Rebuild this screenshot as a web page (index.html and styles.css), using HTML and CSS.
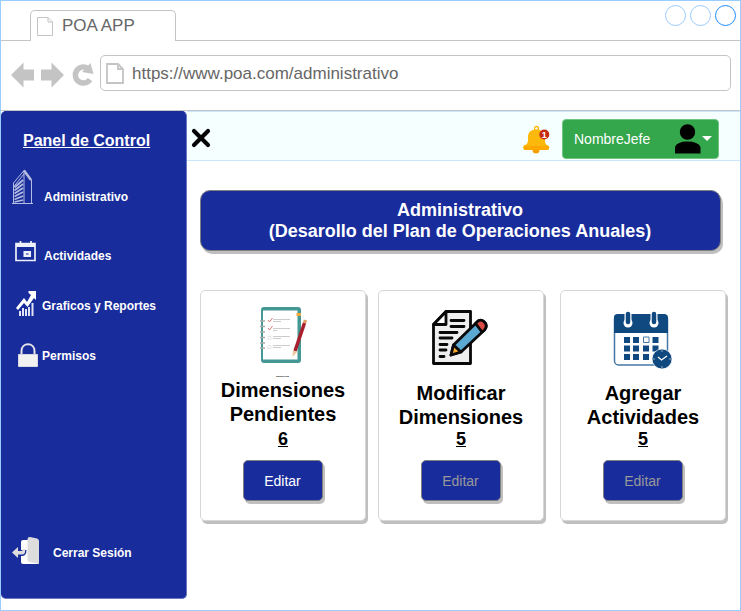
FILE: index.html
```html
<!DOCTYPE html>
<html lang="es">
<head>
<meta charset="utf-8">
<title>POA APP</title>
<link rel="stylesheet" href="styles.css">
</head>
<body>
<div class="window">
  <header class="tabs">
    <div class="tab">
      <svg class="tab-icon" width="16" height="19" viewBox="0 0 16 19" fill="none" stroke="#c4c4c4"><path d="M.5.5H11L15.500 5V18.500H.5ZM11 .5V5H15.500"/></svg>
      <span>POA APP</span>
    </div>
    <div class="controls"><i></i><i></i><i class="active"></i></div>
  </header>
  <nav class="toolbar">
    <svg class="nav-icons" width="83" height="26" viewBox="0 0 83 26">
      <path fill="#c4c4c4" d="M0 13L12.500 .5V7.500H23V18.500H12.500V25.500ZM53 13L40.500 .5V7.500H30V18.500H40.500V25.500Z"/>
      <path fill="none" stroke="#c4c4c4" stroke-width="5.500" d="M79 17.500A8 8 0 1 1 77 6.500"/>
      <path fill="#c4c4c4" d="M79.500 1L82.500 12L71 10Z"/>
    </svg>
    <div class="address">
      <svg width="18" height="21" viewBox="0 0 18 21" fill="none" stroke="#c4c4c4" stroke-width="1.800"><path d="M1 1H12L17 6V20H1ZM12 1V6H17"/></svg>
      <span>https://www.poa.com/administrativo</span>
    </div>
  </nav>
  <div class="app">
    <aside class="sidebar">
      <h2>Panel de Control</h2>
      <a class="item building">
        <svg width="22" height="36" viewBox="0 0 22 36" fill="none" stroke="#b4bce2">
          <path d="M0 34.500H21M1.500 34V14L12 1.500V34M12 1L19.500 11V34M12 5L1.500 18"/>
          <path stroke-width="1.700" d="M2.500 18.500L11 11M2.500 21.500L11 15M2.500 24.500L11 19M2.500 27.500L11 23M2.500 30.500L11 27M2.500 33L11 31"/>
          <path stroke-width="2.500" d="M12 1.500L19 11"/>
        </svg><span>Administrativo</span></a>
      <a class="item calendar">
        <svg width="21" height="21" viewBox="0 0 21 21"><path fill="none" stroke="#eef0fa" stroke-width="1.700" d="M1 2.500H20V19.500H1ZM5.500 0V4M16 0V4"/><path fill="#eef0fa" d="M1 2H20V6H1Z"/><path fill="none" stroke="#eef0fa" stroke-width="2.500" d="M9.700 11.200H14.800V14.800H9.700Z"/></svg><span>Actividades</span></a>
      <a class="item chart">
        <svg width="21" height="26" viewBox="0 0 21 26"><path fill="#fff" d="M0 17L8 7L11 11L15 4L12.500 2V0H20V9L18 7L11.500 16L8 12L2 19Z"/><path stroke="#dfe3f5" stroke-width="2" d="M4 20V25M7 17V25M10 18V25M13 16V25M16.500 12V25"/></svg><span>Graficos y Reportes</span></a>
      <a class="item lock">
        <svg width="20" height="24" viewBox="0 0 20 24"><path fill="none" stroke="#e4e4e8" stroke-width="2" d="M3.500 12V8C3.500-1 16.500-1 16.500 8V12"/><path fill="#f2f2f2" stroke="#d8d8e0" d="M.5 11.500H19.500V23.500H.5Z"/></svg><span>Permisos</span></a>
      <a class="item logout">
        <svg width="28" height="28" viewBox="0 0 28 28"><path fill="#fff" d="M11 3H18L26 26V27H11Q9 27 9 25V5Q9 3 11 3Z"/><path fill="#ddd" d="M15.500 2Q15.500 0 18 0L25 1.500Q27 2 27 4V27L18 25Q15.500 25 15.500 23Z"/><path fill="none" stroke="#182c9c" stroke-width="6" d="M5 16H10Q11.500 16 11.500 13"/><path fill="#ddd" d="M0 15.500L6 10V14H9.500Q11 14 10.500 12H13Q14 17.500 10 17.500H6V21Z"/></svg><span>Cerrar Sesión</span></a>
    </aside>
    <div class="main">
      <div class="topbar">
        <svg class="close" width="20" height="20" viewBox="0 0 20 20"><path fill="none" stroke="#050505" stroke-width="4.200" stroke-linecap="round" d="M3 3L17 17M17 3L3 17"/></svg>
        <svg class="bell" width="27" height="29" viewBox="0 0 27 29">
          <circle cx="13.500" cy="3.500" r="2" fill="none" stroke="#ffb700" stroke-width="1.300"/>
          <circle cx="13" cy="25" r="3.500" fill="#f5a000"/>
          <path fill="#fdb90b" d="M5 12Q5 4.500 13 4.500Q22 4.500 22 12V16Q22 20 26 21Q27 25 24 25H2Q-1 24 1 20Q5 20 5 15Z"/>
          <path fill="#ffa800" d="M1 21H26Q26 25 24 25H2Q0 24 1 21Z"/>
          <circle cx="21.300" cy="9.500" r="5" fill="#c32c12"/>
          <text x="21.300" y="12.700" text-anchor="middle">1</text>
        </svg>
        <div class="user"><span>NombreJefe</span>
          <svg width="38" height="30" viewBox="0 0 38 30"><circle cx="13.500" cy="8" r="7.700"/><path d="M1 29.500V23Q3 17.500 13.500 17.500Q24 17.500 26.500 23V29.500Z"/><path fill="#fff" d="M28 12H38L33 17Z"/></svg>
        </div>
      </div>
      <h1 class="banner">Administrativo<br>(Desarollo del Plan de Operaciones Anuales)</h1>
      <section class="cards">
        <article class="card">
          <svg class="art notebook" width="52" height="76" viewBox="0 0 52 76">
            <rect x="2" y="1" width="40" height="56" rx="3" fill="#459894"/><path fill="#fff" d="M4 4.500H38.500V53.500H4Z"/>
            <path fill="#f0a73a" d="M37.500 7H42V10H37.500Z"/>
            <path stroke="#aaa" stroke-width="1.500" d="M1 15H6M1 20.500H6M1 26H6M1 31.500H6M1 37H6M1 42H6"/>
            <path fill="none" stroke="#ccc" d="M14 13.500H31M14 15.500H22M14 22.500H31M14 24.500H18M14 30.500H31M14 32.500H22M14 39.500H31M14 41.500H22"/>
            <path fill="none" stroke="#e6e6e6" d="M9 30.500H12V33.500H9ZM9 39.500H12V42.500H9Z"/>
            <path fill="none" stroke="#e07a76" d="M9 14L10.500 16L13.500 12M9 22L10.500 24L13.500 20"/>
            <path stroke="#a81f2d" stroke-width="3.500" d="M45.500 17L36 45"/><path stroke="#e0a169" stroke-width="3.500" d="M46.500 14L45.500 17"/><path fill="#efc69b" d="M34 44L38 46L33.500 51Z"/>
            <text x="23.500" y="70.500" text-anchor="middle" textLength="13" lengthAdjust="spacingAndGlyphs">gografico.com</text>
          </svg>
          <h3>Dimensiones<br>Pendientes</h3><b class="count">6</b><button>Editar</button>
        </article>
        <article class="card">
          <svg class="art document" width="56" height="56" viewBox="0 0 56 56" stroke="#080808" stroke-width="2.800" stroke-linecap="round" stroke-linejoin="round">
            <path fill="#eee" d="M14 1.500H38.500V53.500H1.500V14.500Z"/><path fill="#fff" d="M14 1.500V14.500H1.500Z"/>
            <path fill="none" d="M19 10.500H32M19 16.500H32M8 22.500H25M8 28H20M8 34.500H15M8 40H14M8 46.500H12"/>
            <path fill="#5ba9d2" d="M19 45L21.500 35L44.500 12.500C49 7 58 14 52.500 20L29 42Z"/>
            <path fill="#d94b44" d="M43.500 13.500L46 11C51 8 57 15 52.500 20L50 22Z"/>
            <path fill="#f5a52a" d="M19 45L21.500 35L29 42Z"/>
          </svg>
          <h3>Modificar<br>Dimensiones</h3><b class="count">5</b><button disabled>Editar</button>
        </article>
        <article class="card">
          <svg class="art schedule" width="60" height="60" viewBox="0 0 60 60">
            <rect x="1.500" y="4" width="53" height="50" rx="4" fill="#fff" stroke="#4579a4" stroke-width="1.500"/>
            <path fill="#10497f" d="M1 22V6Q1 3 5 3H51Q55 3 55 7V22Z"/>
            <circle cx="15" cy="12" r="4.500" fill="#fff"/><circle cx="41" cy="12" r="4.500" fill="#fff"/>
            <path stroke="#fff" stroke-width="7" d="M15 1V10M41 1V10"/><path stroke="#10497f" stroke-width="4.500" stroke-linecap="round" d="M15 3V11M41 3V11"/>
            <path fill="#10497f" d="M11 26H17V32H11ZM20 26H26V32H20ZM39.500 26H45.500V32H39.500ZM11 34.500H17V40.500H11ZM20 34.500H26V40.500H20ZM30 34.500H36V40.500H30ZM39.500 34.500H45.500V40.500H39.500ZM11 43H17V49H11ZM20 43H26V49H20ZM30 43H36V49H30Z"/>
            <path fill="none" stroke="#4579a4" d="M30.500 26H36V31.500H30.500Z"/>
            <circle cx="49" cy="48" r="10" fill="#10497f" stroke="#fff" stroke-width=".7"/><path fill="none" stroke="#fff" stroke-width="1.300" d="M45 46L48.500 49L54 45"/><path fill="none" stroke="#8eabc5" d="M49 39V41M49 55V57M40 48H42M56 48H58"/>
          </svg>
          <h3>Agregar<br>Actividades</h3><b class="count">5</b><button disabled>Editar</button>
        </article>
      </section>
    </div>
  </div>
</div>
</body>
</html>
```

FILE: styles.css
```css
* { box-sizing: border-box; }
body { margin: 0; font-family: "Liberation Sans", Arial, sans-serif; background: #fff; }
svg { display: block; flex: none; }
.window { width: 741px; height: 611px; border: 1px solid #99ccff; overflow: hidden; }
.tabs { height: 40px; padding: 9px 4px 0 29px; display: flex; justify-content: space-between; align-items: flex-start; border-bottom: 1px solid #c4c4c4; }
.tab { width: 146px; height: 31px; padding: 6px 0 0 6px; display: flex; gap: 9px; border: 1px solid #c4c4c4; border-bottom: 0; border-radius: 5px 5px 0 0; background: #fff; color: #666; font-size: 17px; line-height: 19px; }
.tab span { margin-top: -1px; }
.controls { display: flex; gap: 4px; margin-top: -5px; }
.controls i { width: 21px; height: 21px; border: 1px solid #99ccff; border-radius: 50%; }
.controls .active { border-color: #1a8cff; }
.toolbar { height: 70px; padding: 14px 9px 0 10px; display: flex; gap: 6px; border-bottom: 1px solid #c4c4c4; }
.nav-icons { margin-top: 7px; }
.address { flex: 1; height: 36px; border: 1px solid #c4c4c4; border-radius: 5px; padding-left: 5px; display: flex; align-items: center; gap: 8px; color: #666; font-size: 17px; }
.address span { padding-top: 2px; }
.app { display: flex; height: 499px; }
.sidebar { width: 186px; height: 488px; padding: 20px 0 0 11px; background: #182c9c; border: 1px solid #6b78c4; border-left: 0; border-top-color: #182c9c; border-radius: 5px; color: #fff; display: flex; flex-direction: column; }
.sidebar h2 { margin: 0 0 0 11px; font-size: 16px; line-height: 18px; text-decoration: underline; }
.item { display: flex; font-size: 12px; font-weight: bold; line-height: 14px; }
.building { margin-top: 19px; gap: 10px; }
.building span { margin-top: 21px; }
.calendar { margin: 36px 0 0 3px; gap: 8px; }
.calendar span { margin-top: 8px; }
.chart { margin: 28px 0 0 4px; gap: 5px; }
.chart span { margin-top: 8px; }
.lock { margin: 26px 0 0 6px; gap: 4px; }
.lock span { margin-top: 6px; }
.logout { margin: 170px 0 0; gap: 13px; }
.logout span { margin-top: 9px; }
.main { flex: 1; }
.topbar { height: 50px; padding: 0 21px 0 4px; display: flex; align-items: center; background: #f5ffff; border-top: 1px solid #cce5ff; border-bottom: 1px solid #cce5ff; }
.close { margin-top: 4px; }
.bell { margin: 7px 12px 0 auto; }
.bell text { fill: #fff; font-size: 9px; font-weight: bold; }
.user { width: 157px; height: 40px; margin-top: 5px; padding: 0 6px 0 11px; display: flex; align-items: center; justify-content: space-between; background: #34a64c; border: 1px solid #6fc582; border-radius: 4px; color: #fff; font-size: 14px; }
.banner { margin: 29px 0 0 13px; width: 521px; height: 61px; padding: 9px 1px 0 0; background: #182c9c; border: 1px solid #808080; border-radius: 10px; box-shadow: 2px 3px 0 #c0c0c0; color: #fff; font-size: 18px; line-height: 21px; text-align: center; }
.cards { display: grid; grid-template-columns: 166px 166px 166px; column-gap: 14px; margin: 39px 0 0 13px; }
.card:nth-child(2) { margin-left: -2px; margin-right: 2px; }
.card { height: 231px; display: flex; flex-direction: column; align-items: center; border: 1px solid #d6d6d6; border-radius: 5px; box-shadow: 2px 3px 0 #c0c0c0; background: #fff; }
.notebook { margin-top: 15px; margin-left: 3px; }
.notebook text { font-size: 2.500px; font-weight: bold; }
.document { margin: 19px 2px 15px 0; }
.schedule { margin: 20px 0 10px; }
.card h3 { margin: -4px 0 0; font-size: 20px; line-height: 24px; text-align: center; }
.card:not(:first-child) h3 { margin-top: 0; }
.count { margin-top: 1px; font-size: 18px; line-height: 24px; text-decoration: underline; }
.card:not(:first-child) .count { margin-top: -2px; }
.card button { width: 80px; height: 41px; margin-top: auto; margin-bottom: 19px; padding: 0 1px 0 0; flex: none; background: #182c9c; border: 1px solid #808080; border-radius: 5px; box-shadow: 2px 3px 0 #c0c0c0; color: #fff; font: 14px "Liberation Sans", Arial, sans-serif; }
.card button:disabled { color: #999; }
```
